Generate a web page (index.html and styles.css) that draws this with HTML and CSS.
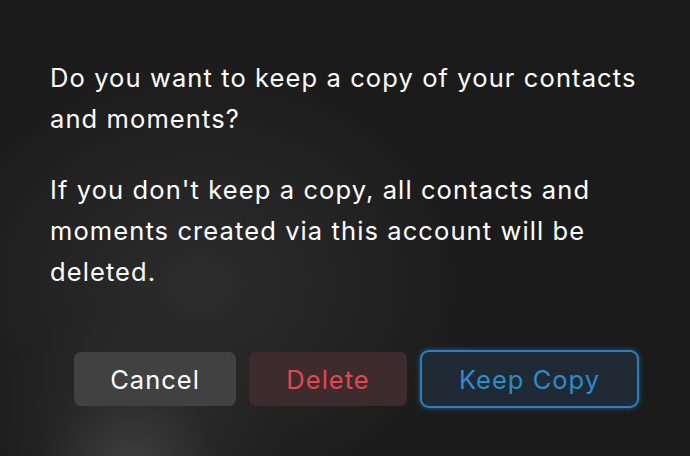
FILE: index.html
```html
<!DOCTYPE html>
<html lang="en">
<head>
  <meta charset="UTF-8" />
  <title>Keep a copy</title>
  <link rel="stylesheet" href="styles.css">
</head>
<body>
  <div class="dialog">
    <p class="question">Do you want to keep a copy of your contacts and moments?</p>
    <p class="note">If you don't keep a copy, all contacts and moments created via this account will be deleted.</p>

    <div class="actions">
      <button class="btn btn-cancel">Cancel</button>
      <button class="btn btn-delete">Delete</button>
      <button class="btn btn-keep">Keep Copy</button>
    </div>
  </div>
</body>
</html>
```

FILE: styles.css
```css
html, body {
  margin: 0;
  height: 100%;
}

body {
  background:
    radial-gradient(circle at 130px 470px, rgba(90, 90, 90, 0.55) 0, rgba(60, 60, 60, 0.2) 90px, rgba(0, 0, 0, 0) 160px),
    radial-gradient(ellipse 280px 230px at 200px 285px, #2c2c2c 0, #232323 55%, rgba(28, 28, 28, 0) 100%),
    #1b1b1b;
  color: #fff;
  font-family: Inter, "Noto Sans", sans-serif;
  overflow: hidden;
}

.dialog {
  width: 592px;
  padding: 57px 0 0 50px;
}

.question,
.note {
  margin: 0;
  font-size: 25.5px;
  line-height: 41px;
  letter-spacing: 1.1px;
}

.note {
  margin-top: 30px;
}

.actions {
  display: flex;
  justify-content: flex-end;
  gap: 13px;
  margin-top: 60px;
  padding-right: 3px;
}

.btn {
  height: 54px;
  border: none;
  border-radius: 7px;
  font-family: inherit;
  font-size: 25.5px;
  letter-spacing: 1px;
  cursor: pointer;
}

.btn-cancel {
  width: 162px;
  background: #414141;
  color: #fff;
}

.btn-delete {
  width: 158px;
  background: #3e2b2d;
  color: #e3474f;
}

.btn-keep {
  width: 219px;
  height: 58px;
  margin-top: -2px;
  background: #1f2a34;
  color: #2c8ccc;
  border: 2px solid #2a7fbf;
  border-radius: 9px;
  box-shadow: 0 0 5px rgba(42, 127, 191, 0.7);
}
```
